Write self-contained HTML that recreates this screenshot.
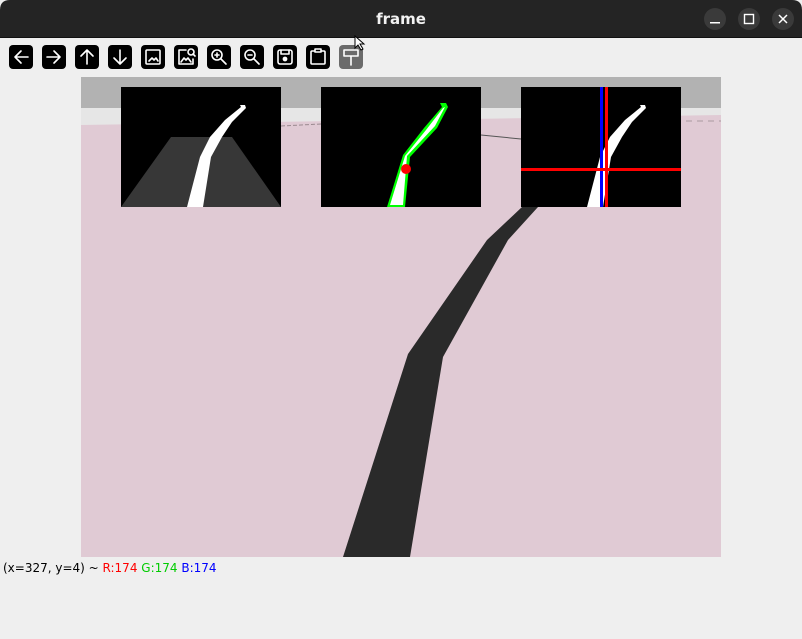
<!DOCTYPE html>
<html><head><meta charset="utf-8"><style>
html,body{margin:0;padding:0;width:802px;height:639px;overflow:hidden;background:#efefef;font-family:"Liberation Sans","DejaVu Sans",sans-serif}
</style></head><body>
<svg width="802" height="639" viewBox="0 0 802 639" xmlns="http://www.w3.org/2000/svg" style="position:absolute;left:0;top:0">
<rect x="0" y="0" width="802" height="639" fill="#efefef"/>
<path d="M0,38 V10 Q0,0 10,0 H792 Q802,0 802,10 V38 Z" fill="#242424"/>
<rect x="0" y="37" width="802" height="1" fill="#111"/>
<text x="401" y="24" text-anchor="middle" fill="#f2f2f2" font-size="15" font-weight="bold" font-family="DejaVu Sans, sans-serif">frame</text>
<circle cx="715" cy="19" r="11" fill="#3a3a3a"/>
<rect x="710" y="22" width="10" height="1.5" fill="#fff"/>
<circle cx="749" cy="19" r="11" fill="#3a3a3a"/>
<rect x="744.5" y="14.5" width="9" height="9" fill="none" stroke="#fff" stroke-width="1.4"/>
<circle cx="783" cy="19" r="11" fill="#3a3a3a"/>
<path d="M779,15 L787,23 M787,15 L779,23" stroke="#fff" stroke-width="1.5"/>
<g stroke="#fff" stroke-width="1.6" fill="none" stroke-linecap="round" stroke-linejoin="round">
<rect x="9" y="45" width="24" height="24" rx="4" fill="#000" stroke="none"/>
<path d="M15,57 H28 M21,51 L15,57 L21,63"/>
<rect x="42" y="45" width="24" height="24" rx="4" fill="#000" stroke="none"/>
<path d="M47,57 H60 M54,51 L60,57 L54,63"/>
<rect x="75" y="45" width="24" height="24" rx="4" fill="#000" stroke="none"/>
<path d="M87,50 V64 M81,56 L87,50 L93,56"/>
<rect x="108" y="45" width="24" height="24" rx="4" fill="#000" stroke="none"/>
<path d="M120,50 V64 M114,58 L120,64 L126,58"/>
<rect x="141" y="45" width="24" height="24" rx="4" fill="#000" stroke="none"/>
<rect x="146" y="50" width="14" height="14" rx="1"/>
<path d="M149,61 L152,58 L154,60 L156,58 L158,61"/>
<rect x="174" y="45" width="24" height="24" rx="4" fill="#000" stroke="none"/>
<path d="M186,50 H179 V64 H193 V59"/>
<circle cx="191" cy="52" r="3"/><path d="M193,54 L195,56"/>
<path d="M181,62 L184,58 L186,60 L188,58 L191,62"/>
<rect x="207" y="45" width="24" height="24" rx="4" fill="#000" stroke="none"/>
<circle cx="217" cy="55" r="5"/><path d="M221,59 L226,64 M215,55 H219 M217,53 V57"/>
<rect x="240" y="45" width="24" height="24" rx="4" fill="#000" stroke="none"/>
<circle cx="250" cy="55" r="5"/><path d="M254,59 L259,64 M248,55 H252"/>
<rect x="273" y="45" width="24" height="24" rx="4" fill="#000" stroke="none"/>
<rect x="278" y="50" width="14" height="14" rx="2"/><path d="M281,50 V54 H289 V50"/>
<circle cx="285" cy="59" r="1.6" fill="#fff"/>
<rect x="306" y="45" width="24" height="24" rx="4" fill="#000" stroke="none"/>
<rect x="311" y="51" width="14" height="13" rx="1"/><rect x="315" y="49" width="6" height="3" fill="#000"/>
<rect x="339" y="45" width="24" height="24" rx="4" fill="#6b6b6b" stroke="none"/>
<path d="M344,50 H358 V56 H344 Z M351,56 V65"/>
</g>
<path d="M355,36 L355,48 L358,45 L361,50 L363,49 L360,44 L364,44 Z" fill="#fff" stroke="#000" stroke-width="1"/>
<rect x="81" y="77" width="640" height="480" fill="#e0cad4"/>
<rect x="81" y="77" width="640" height="31" fill="#b2b2b2"/>
<path d="M81,108 H721 V115 L81,125 Z" fill="#e6e6e6"/>
<path d="M281,126 L321,124" stroke="#9a8a90" stroke-width="1" stroke-dasharray="4 2"/>
<path d="M481,135 L521,139" stroke="#555" stroke-width="1"/>
<path d="M686,121 H721" stroke="#aa99a0" stroke-width="1" stroke-dasharray="6 5"/>
<path d="M343,557 L408,354 L487,240 L522,207 L538,207 L508,240 L443,357 L410,557 Z" fill="#2a2a2a"/>
<!-- thumb 1 -->
<rect x="121" y="87" width="160" height="120" fill="#000"/>
<path d="M121,207 L171,137 L232,137 L281,207 Z" fill="#373737"/>
<path d="M187,207 L200,157 L210,137 L225,120 L241,107 L240,105 L245,105 L246,108 L232,122 L222,137 L211,157 L203,207 Z" fill="#fff"/>
<!-- thumb 2 -->
<rect x="321" y="87" width="160" height="120" fill="#000"/>
<path d="M387,207 L403,155 L424,128 L442,107 L440,103 L446,103 L448,107 L437,128 L410,157 L405,207 Z" fill="#0f0"/>
<path d="M390,205 L405,156 L426,130 L443,108 L445,107 L435,126 L407,156 L403,205 Z" fill="#fff"/>
<circle cx="406" cy="169" r="5" fill="#f00"/>
<!-- thumb 3 -->
<rect x="521" y="87" width="160" height="120" fill="#000"/>
<path d="M587,207 L600,157 L610,137 L625,120 L641,107 L640,105 L645,105 L646,108 L632,122 L622,137 L611,157 L603,207 Z" fill="#fff"/>
<rect x="600" y="87" width="3" height="120" fill="#00f"/>
<rect x="605" y="87" width="3" height="120" fill="#f00"/>
<rect x="521" y="168" width="160" height="3" fill="#f00"/>
<text x="3" y="572" font-size="12" fill="#000" font-family="DejaVu Sans, sans-serif">(x=327, y=4) ~ <tspan fill="#f00">R:174</tspan> <tspan fill="#0c0">G:174</tspan> <tspan fill="#00f">B:174</tspan></text>
</svg>
</body></html>
